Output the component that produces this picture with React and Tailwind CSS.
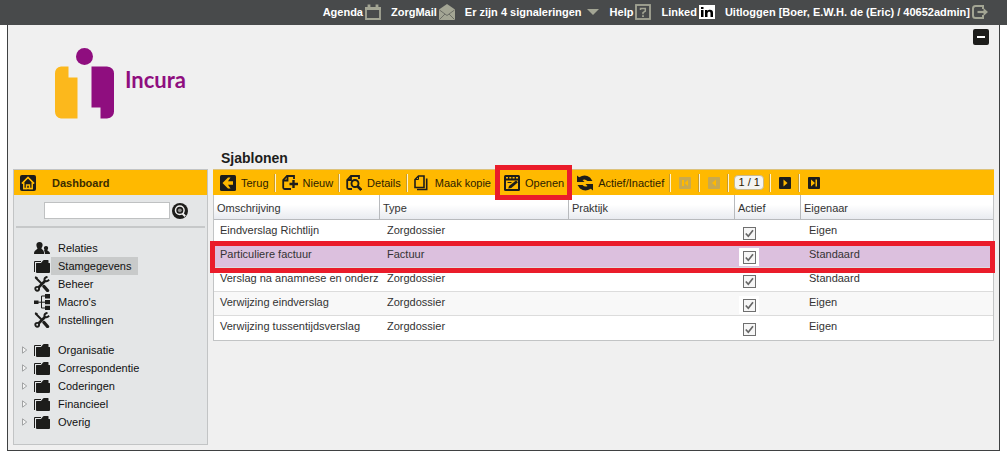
import { useState } from "react";

const DARK = "#1d1d1b";

/* ---------- Icons ---------- */

const CalendarIcon = () => (
  <svg width="16" height="16" viewBox="0 0 16 16" fill="none" stroke="#a3a594">
    <path d="M1 4.5v10.5h14V4.5" strokeWidth="1.8" />
    <path d="M0 4.500h16" strokeWidth="3" />
    <path d="M4 0.500v4M12 0.500v4" strokeWidth="2.800" />
  </svg>
);

const MailIcon = () => (
  <svg width="16" height="16" viewBox="0 0 16 16">
    <path d="M0 5.500L8 0l8 5.500V16H0z" fill="#a3a594" />
    <path d="M0.500 6L8 11.500 15.500 6M0.500 15.500L6 10M15.500 15.500L10 10" fill="none" stroke="#6c6e66" />
  </svg>
);

const HelpIcon = () => (
  <svg width="16" height="16" viewBox="0 0 16 16" fill="none" stroke="#a3a594">
    <rect x="1" y="1" width="14" height="14" strokeWidth="1.800" />
    <path d="M5.500 6V4.600h4.800v2.600L8 8.600v1.600" strokeWidth="1.500" />
    <path d="M8 11.300v1.700" strokeWidth="1.800" />
  </svg>
);

const LinkedInIcon = () => (
  <svg width="16" height="14" viewBox="0 0 16 14">
    <path d="M0 0h16v14H0z" fill="#fff" />
    <path d="M2 5h2.500v7H2zM2 2h2.500v2H2zM6 5h2.300v1C9 5 10 4.800 11 4.800c2 0 3 1.200 3 3.200v4h-2.500V8.300c0-1-.4-1.500-1.300-1.500S8.500 7.400 8.500 8.300V12H6z" fill="#000" />
  </svg>
);

const LogoutIcon = () => (
  <svg width="16" height="14" viewBox="0 0 16 14" fill="none" stroke="#a3a594">
    <path d="M11 4V1H3.500Q1 1 1 3.500v7Q1 13 3.500 13H11v-3" strokeWidth="2" />
    <path d="M5.500 7H12" strokeWidth="2.200" />
    <path d="M11.500 3L16 7l-4.500 4z" fill="#a3a594" stroke="none" />
  </svg>
);

const HomeIcon = () => (
  <svg width="16" height="16" viewBox="0 0 16 16">
    <rect width="16" height="16" rx="2" fill={DARK} />
    <path d="M2 8.500L8 2.500l6 6M3.800 7.500V13.500h8.400V7.500" fill="none" stroke="#ffb900" strokeWidth="1.500" />
    <path d="M3.800 8L8 3.800 12.200 8v5.500H9.800V9.500H6.200v4H3.800z" fill={DARK} />
    <path d="M2 8.500L8 2.500l6 6M3.800 7.500V13.500h2.700V10h3v3.500h2.700V7.500" fill="none" stroke="#ffb900" strokeWidth="1.400" />
  </svg>
);

const SearchIcon = () => (
  <svg width="16" height="16" viewBox="0 0 16 16">
    <circle cx="8" cy="8" r="8" fill={DARK} />
    <circle cx="7.800" cy="7.300" r="4.300" fill="none" stroke="#f0f0f0" strokeWidth="1.500" />
    <circle cx="7.800" cy="7.300" r="1.900" fill="#8d8d8c" />
    <path d="M10.500 10.500l2.700 2.700" stroke="#f0f0f0" strokeWidth="2" />
  </svg>
);

const PeopleIcon = () => (
  <svg width="16" height="16" viewBox="0 0 16 16" fill={DARK}>
    <path d="M5.500 2C7.800 2 8.800 3.400 8.600 5.300 8.500 6.800 7.700 7.700 7.400 8.300c.2 1.200 2.800 1.400 2.800 5.700H0c0-4 3.200-4.200 3.500-5.700C3 7.500 2.500 6.700 2.400 5.300 2.200 3.400 3.300 2 5.500 2z" />
    <path d="M12 6c1.700 0 2.300 1.100 2.100 2.300-.1 1-.6 1.500-.8 2 .3.900 2.700.9 2.700 3.700h-5c0-1.600-.5-2.700-1.100-3.500.5-.2.700-.3.700-.5-.3-.5-.6-1-.7-1.700C9.700 7.100 10.500 6 12 6z" />
  </svg>
);

const FolderIcon = () => (
  <svg width="16" height="14" viewBox="0 0 16 14">
    <path d="M0.500 13V2.500H7" fill="none" stroke={DARK} />
    <path d="M2 4.500Q2 4 2.500 4H7L9 1.500Q9.300 1 10 1h4q.5 0 .5.500V4h1q.5 0 .5.500V13q0 1-1 1H3q-1 0-1-1z" fill={DARK} />
  </svg>
);

const ToolsIcon = () => (
  <svg width="16" height="16" viewBox="0 0 16 16" fill="none" stroke={DARK}>
    <path d="M1.500 1.500l6 6" strokeWidth="2" />
    <path d="M10 10.500l3.500 4" strokeWidth="3.400" strokeLinecap="round" />
    <path d="M1 1l2.500 1" strokeWidth="1.500" />
    <path d="M4.500 11.500L11.500 4.500" strokeWidth="2.600" />
    <path d="M13.500 0.800Q10 1.500 10.500 4.300 12 6.500 15.200 3.800" strokeWidth="1.900" />
    <circle cx="3.200" cy="12.800" r="1.900" strokeWidth="1.900" />
  </svg>
);

const TreeIcon = () => (
  <svg width="16" height="16" viewBox="0 0 16 16">
    <path d="M0 6.500h4.500V10H0zM11 0h5v4.500h-5zM11 6h5v4.300h-5zM11 11.800h5V16h-5z" fill={DARK} />
    <path d="M4 8.200h7M11 2H7.500v12H11" fill="none" stroke={DARK} />
  </svg>
);

const BackIcon = () => (
  <svg width="16" height="16" viewBox="0 0 16 16">
    <rect width="16" height="16" rx="1.500" fill={DARK} />
    <path d="M2.500 8L8 2.500h2.500L8 6.200h5v3.600H8l2.500 3.700H8z" fill="#ffb900" />
  </svg>
);

const NewIcon = () => (
  <svg width="16" height="16" viewBox="0 0 16 16" fill="none" stroke={DARK} strokeWidth="1.800">
    <path d="M12 4V1H5L1.200 5v7.500q0 1.500 1.500 1.500H9" />
    <path d="M5.500 1v4.500H1.500" />
    <path d="M11.500 5v8M7.500 9H16" strokeWidth="2.400" />
  </svg>
);

const DetailsIcon = () => (
  <svg width="16" height="16" viewBox="0 0 16 16" fill="none" stroke={DARK} strokeWidth="1.800">
    <path d="M13 4V1H5L1.200 5v7.500q0 1.500 1.500 1.500H6" />
    <path d="M5 1v4H1.500" />
    <circle cx="9" cy="8.500" r="3.500" strokeWidth="1.900" />
    <path d="M11.300 11l4 4" strokeWidth="2.600" />
  </svg>
);

const CopyIcon = () => (
  <svg width="16" height="16" viewBox="0 0 16 16" fill="none" stroke={DARK} strokeWidth="1.600">
    <path d="M4.500 1H10v11.500H1V4.500z" />
    <path d="M4.500 1v3.500H1" strokeWidth="1" />
    <path d="M12.700 3.500V14.500H3" />
  </svg>
);

const OpenIcon = () => (
  <svg width="16" height="16" viewBox="0 0 16 16">
    <rect width="16" height="16" rx="1.500" fill={DARK} />
    <path d="M2 5.500h12V14H2z" fill="#ffb900" />
    <path d="M2 2h2v1.500H2zM5.300 2h2v1.500h-2zM8.600 2h2v1.500h-2zM12 2h2v1.500h-2z" fill="#ffb900" />
    <path d="M5 11l7-5.500 2 1.800L7.300 13l-3.100.5z" fill={DARK} />
    <path d="M3.500 7.500h4" stroke={DARK} />
  </svg>
);

const RefreshIcon = () => (
  <svg width="16" height="16" viewBox="0 0 16 16" fill={DARK}>
    <path d="M0 0.500L2.200 2.200Q8-1.500 13 2.500L15.500 6H10.500Q8 3.500 5.500 5L7.500 7H0z" />
    <path d="M16 15.500L13.800 13.800Q8 17.500 3 13.500L0.500 10H5.500Q8 12.500 10.500 11L8.500 9H16z" />
  </svg>
);

const pagerPaths = {
  first: "M3 3h2v6H3zM9 3v6L5.500 6z",
  previous: "M8 2.500v7L4 6z",
  next: "M4.500 2.500v7l4-3.500z",
  last: "M3 2.500v7L7 6zM7.500 2.500h1.500v7H7.500z",
};

const PagerIcon = ({ type, color }) => (
  <svg width="12" height="12" viewBox="0 0 12 12">
    <rect width="12" height="12" rx="1" fill={color} />
    <path d={pagerPaths[type]} fill="#ffb900" />
  </svg>
);

const Logo = () => (
  <svg width="59" height="71" viewBox="0 0 59 71">
    <circle cx="29.500" cy="8.500" r="8.500" fill="#8f0e7f" />
    <path d="M6 18.500h7.500V29.500h9V70.500H6q-6-1-6-7V25.500q0-6 6-7z" fill="#fcb81c" />
    <path d="M36.500 18.500H52q7 1 7 7v38q0 6-7 7h-6.500v-11h-9z" fill="#8f0e7f" />
  </svg>
);

/* ---------- Data ---------- */

const topLinks = [
  { label: "Agenda", icon: <CalendarIcon /> },
  { label: "ZorgMail", icon: <MailIcon /> },
];

const mainMenu = [
  { label: "Relaties", icon: <PeopleIcon /> },
  { label: "Stamgegevens", icon: <FolderIcon /> },
  { label: "Beheer", icon: <ToolsIcon /> },
  { label: "Macro's", icon: <TreeIcon /> },
  { label: "Instellingen", icon: <ToolsIcon /> },
];

const subMenu = ["Organisatie", "Correspondentie", "Coderingen", "Financieel", "Overig"];

const actions = [
  { label: "Terug", icon: <BackIcon /> },
  { label: "Nieuw", icon: <NewIcon /> },
  { label: "Details", icon: <DetailsIcon /> },
  { label: "Maak kopie", icon: <CopyIcon /> },
  { label: "Openen", icon: <OpenIcon />, marked: true },
  { label: "Actief/Inactief", icon: <RefreshIcon /> },
];

const columns = ["Omschrijving", "Type", "Praktijk", "Actief", "Eigenaar"];

const rows = [
  { name: "Eindverslag Richtlijn", type: "Zorgdossier", owner: "Eigen" },
  { name: "Particuliere factuur", type: "Factuur", owner: "Standaard" },
  { name: "Verslag na anamnese en onderz", type: "Zorgdossier", owner: "Standaard" },
  { name: "Verwijzing eindverslag", type: "Zorgdossier", owner: "Eigen" },
  { name: "Verwijzing tussentijdsverslag", type: "Zorgdossier", owner: "Eigen" },
];

/* ---------- Parts ---------- */

const TopBar = () => (
  <nav className="flex h-[25px] items-center justify-end gap-[10px] bg-[#484a4b] pr-[19px] pb-0.5 font-bold text-white">
    {topLinks.map((link) => (
      <a key={link.label} href="#" className="flex items-center gap-0.5">
        {link.label}
        {link.icon}
      </a>
    ))}
    <button className="flex items-center gap-1">
      Er zijn 4 signaleringen
      <svg width="14" height="6" viewBox="0 0 14 6">
        <path d="M1 0h12L7 6z" fill="#a3a594" />
      </svg>
    </button>
    <a href="#" className="flex items-center gap-0.5">
      Help
      <HelpIcon />
    </a>
    <a href="#" className="flex items-center gap-0.5">
      Linked
      <LinkedInIcon />
    </a>
    <a href="#" className="flex items-center gap-0.5">
      Uitloggen [Boer, E.W.H. de (Eric) / 40652admin]
      <LogoutIcon />
    </a>
  </nav>
);

const Sidebar = ({ active, setActive }) => (
  <aside className="border border-[#c2c4c5] bg-[#e4e6e7] pb-[13px]">
    <a href="#" className="flex h-[25px] items-center gap-4 bg-[#ffb900] pl-1.5 font-bold text-[#3b2c00]">
      <HomeIcon />
      Dashboard
    </a>
    <form className="mx-0.5 flex h-[33px] items-center gap-0.5 border-b-2 border-[#c6c8c9] pl-7" onSubmit={(e) => e.preventDefault()}>
      <input type="text" aria-label="Zoeken" className="h-[17px] w-[126px] border border-[#bfc1c2] bg-white px-1 outline-none" />
      <button aria-label="Zoek">
        <SearchIcon />
      </button>
    </form>

    <ul className="mt-[11px] pl-5">
      {mainMenu.map((item) => (
        <li key={item.label} className="flex h-[18px] items-center">
          <span className="flex w-[17px] justify-start">{item.icon}</span>
          <button
            onClick={() => setActive(item.label)}
            className={`h-[18px] px-[7px] ${active === item.label ? "bg-[#c8caca]" : ""}`}
          >
            {item.label}
          </button>
        </li>
      ))}
    </ul>

    <ul className="mt-3 pl-2">
      {subMenu.map((label) => (
        <li key={label}>
          <button className="flex h-[18px] items-center">
            <svg width="12" height="8" viewBox="0 0 12 8" fill="#f4f4f4" stroke="#a0a2a3">
              <path d="M0.500 0.800v6.400L4.700 4z" />
            </svg>
            <FolderIcon />
            <span className="pl-2">{label}</span>
          </button>
        </li>
      ))}
    </ul>
  </aside>
);

const Separator = () => <span className="h-[18px] w-0.5 border-l border-[#c79b2c] bg-[#fff3cf]"></span>;

const Toolbar = () => (
  <div className="flex h-[26px] items-center border-t border-[#dcc27c] bg-[#ffb900] pl-px text-[#2b2000]">
    {actions.map((action) => (
      <div key={action.label} className="flex items-center">
        <button className="relative flex h-[25px] items-center gap-[5px] pr-[5px] pl-1.5 whitespace-nowrap">
          {action.icon}
          {action.label}
          {action.marked && <span className="absolute -inset-x-[3px] -inset-y-[5px] z-10 border-5 border-[#ea1c2a]"></span>}
        </button>
        <Separator />
      </div>
    ))}
    <button aria-label="Eerste pagina" disabled className="flex w-[27px] justify-center">
      <PagerIcon type="first" color="#c9a94f" />
    </button>
    <Separator />
    <button aria-label="Vorige pagina" disabled className="flex w-[27px] justify-center">
      <PagerIcon type="previous" color="#c9a94f" />
    </button>
    <Separator />
    <span className="mx-[5px] w-[30px] rounded-sm border border-[#c9b98a] bg-[#f4f4f2] text-center leading-[13px]">1 / 1</span>
    <Separator />
    <button aria-label="Volgende pagina" className="flex w-[27px] justify-center">
      <PagerIcon type="next" color={DARK} />
    </button>
    <Separator />
    <button aria-label="Laatste pagina" className="flex w-[27px] justify-center">
      <PagerIcon type="last" color={DARK} />
    </button>
  </div>
);

const ActiveCheckbox = ({ label }) => (
  <span className="grid h-[18px] w-5 place-items-center bg-white">
    <input
      type="checkbox"
      checked
      readOnly
      aria-label={label}
      className="col-start-1 row-start-1 size-[13px] appearance-none border border-[#6f6f6f] bg-[#f6f6f6]"
    />
    <svg width="9" height="9" viewBox="0 0 9 9" className="pointer-events-none col-start-1 row-start-1">
      <path d="M0.800 4.500L3.300 7.300 8 1.300" fill="none" stroke="#666" strokeWidth="1.700" />
    </svg>
  </span>
);

const TemplateTable = ({ selected, setSelected }) => (
  <table className="w-full table-fixed border-separate border-spacing-0 border border-t-0 border-[#c2c4c5] bg-white text-left text-[#333]">
    <colgroup>
      <col className="w-[166px]" />
      <col className="w-[189px]" />
      <col className="w-[166px]" />
      <col className="w-[66px]" />
      <col />
    </colgroup>
    <thead>
      <tr className="h-[25px]">
        {columns.map((column) => (
          <th
            key={column}
            className="border-r border-b border-[#b8babd] bg-linear-to-b from-white from-40% to-[#e9ebf0] p-0 pt-0.5 pl-[3px] font-normal last:border-r-0"
          >
            {column}
          </th>
        ))}
      </tr>
    </thead>
    <tbody>
      {rows.map((row, i) => (
        <tr
          key={row.name}
          onClick={() => setSelected(i)}
          className={`relative h-6 align-top leading-5 *:border-b *:border-[#dcdcdc] *:p-0 last:*:border-b-0 ${
            selected === i ? "bg-[#dcc0de]" : i % 2 ? "bg-[#f8f8f8]" : ""
          }`}
        >
          <td>
            <div className="pl-1.5 whitespace-nowrap">{row.name}</div>
          </td>
          <td>
            <div className="pl-[7px]">{row.type}</div>
          </td>
          <td></td>
          <td>
            <div className="pt-1 pl-1">
              <ActiveCheckbox label={`${row.name} actief`} />
            </div>
          </td>
          <td>
            <div className="pl-2">{row.owner}</div>
            {selected === i && (
              <span className="pointer-events-none absolute -top-[3px] -right-0.5 -bottom-[5px] -left-1 z-10 border-5 border-[#ea1c2a]"></span>
            )}
          </td>
        </tr>
      ))}
    </tbody>
  </table>
);

/* ---------- Page ---------- */

const App = () => {
  const [active, setActive] = useState("Stamgegevens");
  const [selected, setSelected] = useState(1);

  return (
    <div className="min-h-screen bg-white pb-2 font-['Liberation_Sans',Arial,sans-serif] text-[11px] leading-4 text-[#111]">
      <TopBar />
      <div className="mx-[7px] border border-t-0 border-[#3f4142] bg-[#f0f0f0] px-[5px] pb-[5px]">
        <header className="flex h-[124px] items-start justify-between pr-[5px]">
          <div className="flex items-start gap-[11px] pt-[23px] pl-[42px]">
            <Logo />
            <span className="pt-[18px] font-['Lato',sans-serif] text-[22px] leading-7 font-bold text-[#8f0e7f]">Incura</span>
          </div>
          <button aria-label="Inklappen" className="mt-1 flex size-4 items-center justify-center rounded-xs bg-[#1d1d1b]">
            <span className="h-0.5 w-2 bg-white"></span>
          </button>
        </header>

        <div className="grid grid-cols-[195px_minmax(0,1fr)] gap-x-[5px]">
          <h1 className="col-start-2 h-5 pl-2 text-sm leading-[18px] font-bold text-[#1d1d1b]">Sjablonen</h1>
          <Sidebar active={active} setActive={setActive} />
          <main className="col-start-2">
            <Toolbar />
            <TemplateTable selected={selected} setSelected={setSelected} />
          </main>
        </div>
      </div>
    </div>
  );
};

export default App;
